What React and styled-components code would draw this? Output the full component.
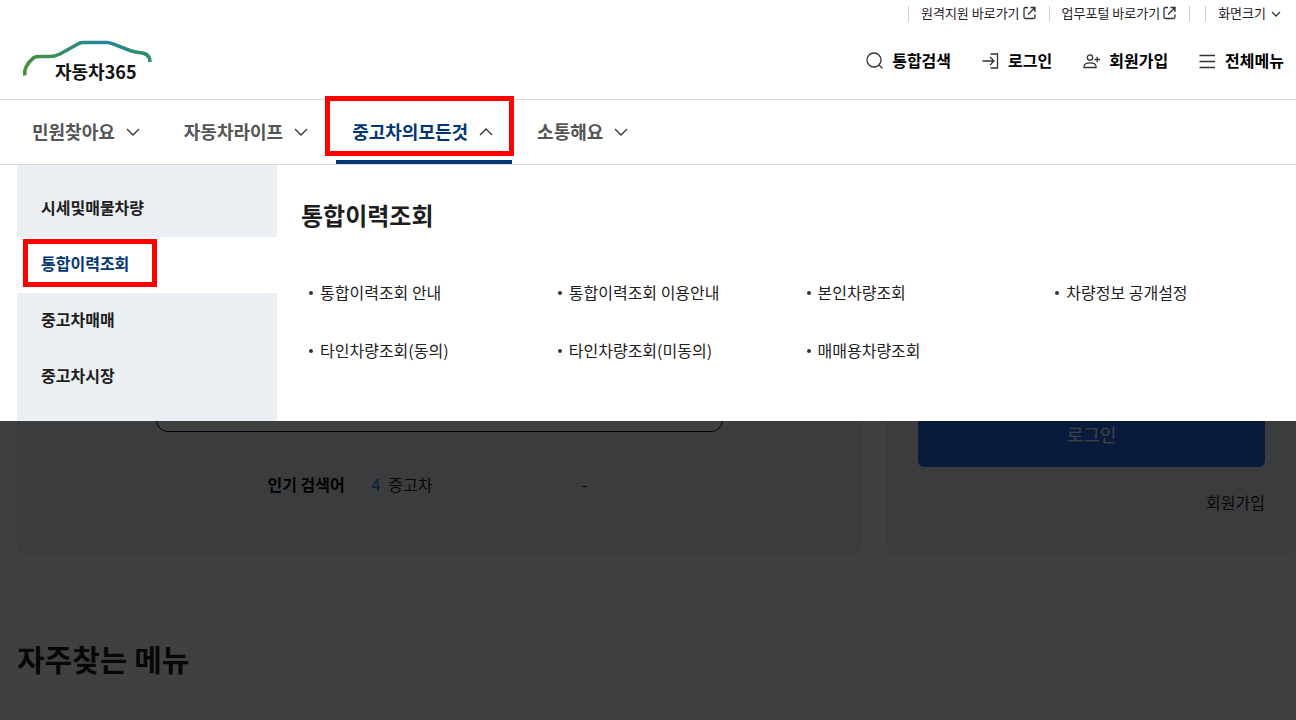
import styled, { createGlobalStyle } from 'styled-components';

const GlobalStyle = createGlobalStyle`
  * {
    box-sizing: border-box;
  }
  body {
    margin: 0;
    overflow: hidden;
    background: #fff;
    color: #1e2124;
    font-family: 'Noto Sans CJK KR', sans-serif;
    font-size: 16px;
    line-height: 24px;
  }
  a {
    color: inherit;
    text-decoration: none;
  }
  button, input {
    font: inherit;
  }
  ul {
    margin: 0;
    padding: 0;
    list-style: none;
  }
`;

const Page = styled.div`
  position: relative;
  min-height: 100vh;
  overflow: hidden;
`;

const Header = styled.header`
  position: relative;
  z-index: 2;
  background: #fff;
`;

const Utility = styled.div`
  display: flex;
  justify-content: flex-end;
  align-items: center;
  height: 27px;
  padding-right: 14px;
  font-size: 13px;
  line-height: 16px;
`;

const UtilityItem = styled.div`
  display: flex;
  align-items: center;
  height: 16px;
  padding: 0 12px;
  border-left: 1px solid #cdd1d5;

  &:last-child {
    padding-right: 0;
  }
`;

const UtilityBlank = styled.span`
  width: 16px;
  height: 16px;
  border-left: 1px solid #cdd1d5;
`;

const UtilityLink = styled.a`
  display: flex;
  align-items: center;
  gap: 2px;
  padding-bottom: 2px;
`;

const SizeButton = styled.button`
  display: flex;
  align-items: center;
  gap: 4px;
  padding: 0 0 2px;
  border: 0;
  background: none;
  color: inherit;
`;

const Brand = styled.div`
  display: flex;
  justify-content: space-between;
  align-items: center;
  height: 72px;
  padding: 0 12px 6px 20px;
`;

const LogoLink = styled.a`
  display: flex;
`;

const Actions = styled.nav`
  display: flex;
  gap: 29px;
`;

const Action = styled.a`
  display: flex;
  align-items: center;
  gap: 8px;
  color: #000;
  font-weight: 700;
`;

const Gnb = styled.nav`
  display: flex;
  gap: 9px;
  height: 66px;
  padding-left: 16px;
  border-top: 1px solid #d8d8d8;
  border-bottom: 1px solid #d8d8d8;
`;

const GnbButton = styled.button`
  position: relative;
  display: flex;
  align-items: center;
  gap: 8px;
  padding: 0 16px 2px;
  border: 0;
  border-bottom: 4px solid ${(props) => (props.$active ? '#003675' : 'transparent')};
  border-top: 4px solid transparent;
  background: none;
  color: ${(props) => (props.$active ? '#003675' : '#555')};
  font-size: 18px;
  font-weight: 700;
`;

const Mega = styled.div`
  position: absolute;
  top: 100%;
  left: 0;
  right: 0;
  display: flex;
  padding-left: 17px;
  background: #fff;
`;

const Side = styled.ul`
  width: 260px;
  padding: 16px 0;
  background: #eceff4;
`;

const SideItem = styled.li`
  position: relative;
  background: ${(props) => (props.$active ? '#fff' : 'none')};
`;

const SideLink = styled.a`
  display: block;
  padding: 14px 24px 18px;
  color: ${(props) => (props.$active ? '#003675' : '#1e1e1e')};
  font-weight: 700;
`;

// red guide frames around the current menu
const Mark = styled.span`
  position: absolute;
  border: 5px solid #f00;
  pointer-events: none;
`;

const GnbMark = styled(Mark)`
  top: -8px;
  right: -2px;
  bottom: 4px;
  left: -11px;
`;

const SideMark = styled(Mark)`
  top: 2px;
  left: 6px;
  width: 134px;
  height: 48px;
`;

const SubMenu = styled.section`
  flex: 1;
  padding: 33px 0 0 24px;
`;

const SubTitle = styled.h2`
  margin: 0 0 48px;
  color: #1e1e1e;
  font-size: 24px;
  line-height: 34px;
`;

const SubList = styled.ul`
  display: grid;
  grid-template-columns: repeat(4, 1fr);
  row-gap: 34px;
`;

const SubItem = styled.li`
  display: flex;
  align-items: center;
  gap: 7px;
  padding-left: 8px;

  &::before {
    content: '';
    width: 4px;
    height: 4px;
    margin-top: 2px;
    border-radius: 50%;
    background: #333;
  }
`;

const Dim = styled.div`
  position: absolute;
  inset: 0;
  z-index: 1;
  background: rgba(0, 0, 0, 0.75);
`;

const Main = styled.main`
  padding: 24px 0 0 17px;
`;

const Cards = styled.div`
  display: grid;
  grid-template-columns: 845fr 410fr;
  gap: 24px;
`;

const Card = styled.section`
  display: flex;
  flex-direction: column;
  justify-content: flex-end;
  height: 367px;
  border-radius: 12px;
  background: #eceff4;
`;

const SearchCard = styled(Card)`
  align-items: center;
  padding-bottom: 60px;
`;

const SearchInput = styled.input`
  width: 67%;
  height: 64px;
  margin-bottom: 40px;
  border: 1px solid #000;
  border-radius: 12px;
  background: #fff;
`;

const Popular = styled.div`
  display: flex;
  width: 67%;
  padding-left: 111px;
`;

const PopularTitle = styled.strong`
  width: 104px;
  color: #000;
`;

const PopularWord = styled.a`
  display: flex;
  gap: 8px;
  width: 210px;
`;

const Rank = styled.span`
  color: #256ef4;
`;

const LoginCard = styled(Card)`
  padding: 0 31px 42px 32px;
`;

const LoginButton = styled.button`
  height: 64px;
  padding-bottom: 4px;
  border: 0;
  border-radius: 6px;
  background: #256ef4;
  color: #fff;
  font-size: 18px;
`;

const JoinLink = styled.a`
  align-self: flex-end;
  margin-top: 23px;
`;

const SectionTitle = styled.h2`
  margin: 80px 0 0;
  color: #1e1e1e;
  font-size: 30px;
  line-height: 44px;
`;

const gnb = ['민원찾아요', '자동차라이프', '중고차의모든것', '소통해요'];
const side = ['시세및매물차량', '통합이력조회', '중고차매매', '중고차시장'];
const sub = [
  '통합이력조회 안내',
  '통합이력조회 이용안내',
  '본인차량조회',
  '차량정보 공개설정',
  '타인차량조회(동의)',
  '타인차량조회(미동의)',
  '매매용차량조회',
];

function Icon({ size = 20, children }) {
  return (
    <svg
      width={size}
      height={size}
      viewBox={`0 0 ${size} ${size}`}
      fill="none"
      stroke="#333"
      strokeWidth="1.3"
      aria-hidden="true"
    >
      {children}
    </svg>
  );
}

function ExternalIcon() {
  return (
    <Icon size={15}>
      <path d="M6 2.500H3.500A1.500 1.500 0 0 0 2 4V12A1.500 1.500 0 0 0 3.500 13.500H11.500A1.500 1.500 0 0 0 13 12V9.500M8.500 2.500H13V7M13 2.500L6 9.500" />
    </Icon>
  );
}

function Logo() {
  return (
    <svg width="136" height="46" viewBox="0 0 136 46" role="img" aria-label="자동차365">
      <defs>
        <linearGradient id="car" gradientUnits="userSpaceOnUse" x1="4" x2="131" y1="0" y2="0">
          <stop offset="0" stopColor="#4a9135" />
          <stop offset="0.3" stopColor="#348d69" />
          <stop offset="0.6" stopColor="#24859c" />
          <stop offset="1" stopColor="#2f9165" />
        </linearGradient>
      </defs>
      <path
        d="M5 38.500C3.500 33 7 26 14 20.500Q16 19.500 19 19.500H29Q35 19.500 40 17L57 7.500Q60 5.500 63 5.500H87Q90 5.500 93 7L110 13.500Q114 15 119 15.500Q130 16 130 25"
        fill="none"
        stroke="url(#car)"
        strokeWidth="3.500"
      />
      <text x="35" y="42" fontSize="18" fontWeight="700" fill="#111">자동차365</text>
    </svg>
  );
}

export default function App() {
  return (
    <Page>
      <GlobalStyle />
      <Header>
        <Utility>
          <UtilityItem>
            <UtilityLink href="#remote">
              원격지원 바로가기
              <ExternalIcon />
            </UtilityLink>
          </UtilityItem>
          <UtilityItem>
            <UtilityLink href="#portal">
              업무포털 바로가기
              <ExternalIcon />
            </UtilityLink>
          </UtilityItem>
          <UtilityBlank />
          <UtilityItem>
            <SizeButton type="button">
              화면크기
              <Icon size={12}>
                <path d="M2 5L6 9L10 5" />
              </Icon>
            </SizeButton>
          </UtilityItem>
        </Utility>

        <Brand>
          <LogoLink href="#home">
            <Logo />
          </LogoLink>
          <Actions>
            <Action href="#search">
              <Icon>
                <circle cx="10" cy="10" r="7" />
                <path d="M15 15L18.500 18.500" />
              </Icon>
              통합검색
            </Action>
            <Action href="#login">
              <Icon>
                <path d="M10.500 4H17.500V18H10.500M2.500 11H14M10 7L14 11L10 15" />
              </Icon>
              로그인
            </Action>
            <Action href="#join">
              <Icon>
                <circle cx="9" cy="7.500" r="2.700" />
                <path d="M3 17.500V16.500C3 14 5.500 12.800 9 12.800S15 14 15 16.500V17.500ZM13.500 9.500H19M16.200 6.700V12.300" />
              </Icon>
              회원가입
            </Action>
            <Action href="#all">
              <Icon>
                <path d="M2.500 5.500H18M2.500 11.500H18M2.500 17.500H18" />
              </Icon>
              전체메뉴
            </Action>
          </Actions>
        </Brand>

        <Gnb>
          {gnb.map((name, i) => (
            <GnbButton key={name} type="button" $active={i === 2} aria-expanded={i === 2}>
              {name}
              <Icon>
                <path d={i === 2 ? 'M4 14L10 8L16 14' : 'M4 8L10 14L16 8'} />
              </Icon>
              {i === 2 && <GnbMark />}
            </GnbButton>
          ))}
        </Gnb>

        <Mega>
          <Side>
            {side.map((name, i) => (
              <SideItem key={name} $active={i === 1}>
                <SideLink href="#menu" $active={i === 1}>{name}</SideLink>
                {i === 1 && <SideMark />}
              </SideItem>
            ))}
          </Side>
          <SubMenu>
            <SubTitle>통합이력조회</SubTitle>
            <SubList>
              {sub.map((name) => (
                <SubItem key={name}>
                  <a href="#sub">{name}</a>
                </SubItem>
              ))}
            </SubList>
          </SubMenu>
        </Mega>
      </Header>

      <Main>
        <Cards>
          <SearchCard>
            <SearchInput type="text" aria-label="검색어" />
            <Popular>
              <PopularTitle>인기 검색어</PopularTitle>
              <PopularWord href="#word">
                <Rank>4</Rank>
                중고차
              </PopularWord>
              <span>-</span>
            </Popular>
          </SearchCard>
          <LoginCard>
            <LoginButton type="button">로그인</LoginButton>
            <JoinLink href="#join">회원가입</JoinLink>
          </LoginCard>
        </Cards>
        <SectionTitle>자주찾는 메뉴</SectionTitle>
      </Main>
      <Dim />
    </Page>
  );
}
